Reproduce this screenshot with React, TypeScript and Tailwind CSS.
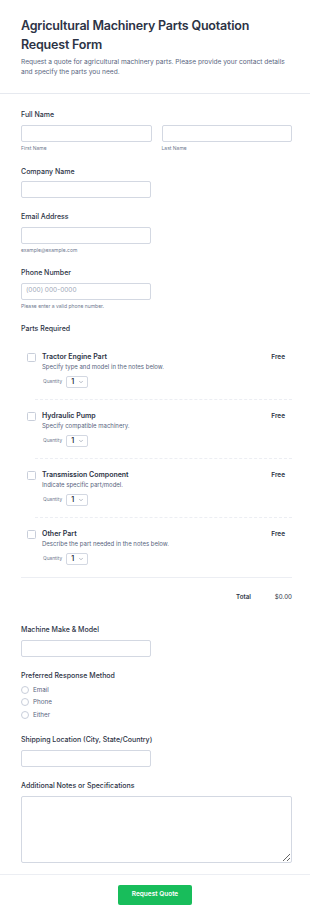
import { ChevronDown } from "lucide-react";

const PARTS = [
  { name: "Tractor Engine Part", desc: "Specify type and model in the notes below." },
  { name: "Hydraulic Pump", desc: "Specify compatible machinery." },
  { name: "Transmission Component", desc: "Indicate specific part/model." },
  { name: "Other Part", desc: "Describe the part needed in the notes below." },
];

const Label = ({ children }: { children: React.ReactNode }) => (
  <div className="text-[7px] leading-[10px] font-medium text-[#2c3345]">{children}</div>
);

const Input = ({ wide, placeholder }: { wide?: boolean; placeholder?: string }) => (
  <div
    className={`h-[17px] rounded-[2px] border border-[#d3d8e2] bg-white flex items-center px-[4px] text-[6.5px] text-[#a0a8b8] ${
      wide ? "w-full" : "w-[130px]"
    }`}
  >
    {placeholder}
  </div>
);

const Hint = ({ children }: { children: React.ReactNode }) => (
  <div className="text-[5px] leading-[7px] text-[#6f7a8f] mt-[3.5px]">{children}</div>
);

export default function App() {
  return (
    <div className="w-[310px] min-h-[921px] bg-white font-['Inter',sans-serif]">
      {/* Header */}
      <div className="pl-[21px] pr-[18px] pt-[16px] pb-[16px] border-b border-[#e6e9ef]">
        <h1 className="text-[12.5px] leading-[19px] font-semibold text-[#2c3345] tracking-[-0.2px]">
          Agricultural Machinery Parts Quotation Request Form
        </h1>
        <p className="mt-[2.5px] text-[6.6px] leading-[10px] text-[#57647e]">
          Request a quote for agricultural machinery parts. Please provide your contact details and specify the parts you need.
        </p>
      </div>

      <div className="pl-[21px] pr-[18px] pt-[16px]">
        {/* Full Name */}
        <Label>Full Name</Label>
        <div className="mt-[5px] flex gap-[10px]">
          <div className="flex-1">
            <Input wide />
            <Hint>First Name</Hint>
          </div>
          <div className="flex-1">
            <Input wide />
            <Hint>Last Name</Hint>
          </div>
        </div>

        <div className="mt-[14.5px]">
          <Label>Company Name</Label>
          <div className="mt-[4px]">
            <Input />
          </div>
        </div>

        <div className="mt-[14px]">
          <Label>Email Address</Label>
          <div className="mt-[5px]">
            <Input />
          </div>
          <Hint>example@example.com</Hint>
        </div>

        <div className="mt-[13.5px]">
          <Label>Phone Number</Label>
          <div className="mt-[5px]">
            <Input placeholder="(000) 000-0000" />
          </div>
          <Hint>Please enter a valid phone number.</Hint>
        </div>

        {/* Parts */}
        <div className="mt-[13.5px]">
          <Label>Parts Required</Label>
          <div className="mt-[7px]">
            {PARTS.map((p, i) => (
              <div key={p.name}>
                <div className="pt-[11px] pb-[11px] pl-[6px] flex">
                  <div className="mt-[1px] w-[9px] h-[9px] rounded-[1.5px] border border-[#c8ceda] bg-white shrink-0" />
                  <div className="ml-[6px] flex-1">
                    <div className="flex justify-between pr-[7px]">
                      <span className="text-[7px] leading-[10px] font-semibold text-[#2c3345]">{p.name}</span>
                      <span className="text-[6.5px] leading-[10px] font-semibold text-[#2c3345]">Free</span>
                    </div>
                    <div className="text-[6px] leading-[9px] text-[#57647e]">{p.desc}</div>
                    <div className="mt-[5px] flex items-center">
                      <span className="text-[4.8px] text-[#6f7a8f] ml-[1px]">Quantity</span>
                      <div className="ml-[4px] w-[22px] h-[12px] rounded-[2px] border border-[#d3d8e2] flex items-center pl-[4px] gap-[4px]">
                        <span className="text-[7px] font-semibold text-[#2c3345] leading-none">1</span>
                        <ChevronDown size={6} strokeWidth={2} className="text-[#6f7a8f]" />
                      </div>
                    </div>
                  </div>
                </div>
                {i < PARTS.length - 1 ? (
                  <div className="ml-[14px] border-t border-dashed border-[#eceef3]" />
                ) : null}
              </div>
            ))}
          </div>
          <div className="mt-[1px] border-t border-[#eceef3]" />
          <div className="mt-[14px] flex justify-end items-center text-[6.2px] text-[#2c3345]">
            <span className="font-semibold">Total</span>
            <span className="ml-[24px]">$0.00</span>
          </div>
        </div>

        <div className="mt-[24px]">
          <Label>Machine Make &amp; Model</Label>
          <div className="mt-[5px]">
            <Input />
          </div>
        </div>

        <div className="mt-[14px]">
          <Label>Preferred Response Method</Label>
          <div className="mt-[5px] flex flex-col gap-[4.5px]">
            {["Email", "Phone", "Either"].map((r) => (
              <div key={r} className="flex items-center">
                <div className="w-[8px] h-[8px] rounded-full border border-[#c8ceda] bg-white" />
                <span className="ml-[4px] text-[6.3px] leading-[8px] text-[#57647e]">{r}</span>
              </div>
            ))}
          </div>
        </div>

        <div className="mt-[16px]">
          <Label>Shipping Location (City, State/Country)</Label>
          <div className="mt-[5px]">
            <Input />
          </div>
        </div>

        <div className="mt-[14px]">
          <Label>Additional Notes or Specifications</Label>
          <textarea className="mt-[5px] block w-full h-[67px] rounded-[2px] border border-[#d3d8e2] bg-white outline-none" />
        </div>
      </div>

      <div className="mt-[11px] border-t border-[#eceef3] pt-[10px] pb-[17px] flex justify-center">
        <button className="w-[74px] h-[20px] rounded-[2px] bg-[#18bd5b] text-white text-[6.5px] font-semibold">
          Request Quote
        </button>
      </div>
    </div>
  );
}
